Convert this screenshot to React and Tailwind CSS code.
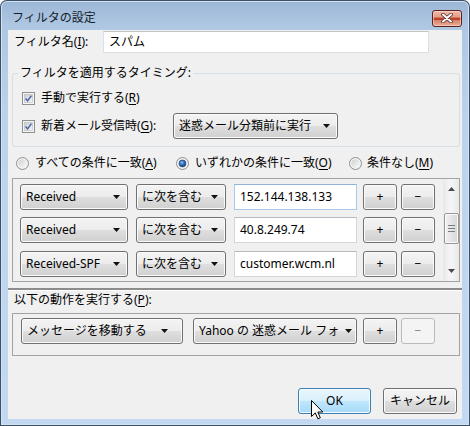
import React from "react";

const btn =
  "flex items-center border border-[#707070] rounded-[3px] bg-[linear-gradient(to_bottom,#f4f4f4_0%,#ececec_48%,#dedede_52%,#d0d0d0_100%)] shadow-[inset_0_0_0_1px_#fbfbfb]";

function Arrow() {
  return (
    <svg width="7" height="4" viewBox="0 0 7 4" className="shrink-0">
      <path d="M0 0H7L3.5 4Z" fill="#111" />
    </svg>
  );
}

function Combo({ w, children, pr = "pr-[7px]" }) {
  return (
    <div className={`${btn} ${w} ${pr} h-[26px] pl-[5px] gap-[2px]`}>
      <span className="flex-1 min-w-0 whitespace-nowrap">{children}</span>
      <Arrow />
    </div>
  );
}

function Btn({ children, disabled }) {
  if (disabled)
    return (
      <div className="flex items-center justify-center w-[34px] h-[26px] border border-[#b8bcbf] rounded-[3px] bg-[#f4f4f4] text-[#8a8a8a]">
        {children}
      </div>
    );
  return <div className={`${btn} justify-center w-[34px] h-[26px]`}>{children}</div>;
}

function Input({ w, children, focus }) {
  return (
    <div
      className={`${w} h-[26px] flex items-center px-[5px] bg-white border ${
        focus ? "border-[#a9c9e8] border-t-[#8fb4d8]" : "border-[#d3d6db] border-t-[#b5b9bf]"
      }`}
    >
      {children}
    </div>
  );
}

function Check() {
  return (
    <svg width="13" height="13" viewBox="0 0 13 13" className="shrink-0">
      <defs>
        <linearGradient id="cbg" x1="0" y1="0" x2="1" y2="1">
          <stop offset="0" stopColor="#c9ccd1" />
          <stop offset="1" stopColor="#f7f7f7" />
        </linearGradient>
      </defs>
      <rect x="0.5" y="0.5" width="12" height="12" fill="#f5f5f5" stroke="#8e8f8f" />
      <rect x="2.5" y="2.5" width="8" height="8" fill="url(#cbg)" stroke="#b9b9b9" strokeWidth="0.6" />
      <path d="M3.6 6.6 L5.6 8.9 L9.4 3.6" fill="none" stroke="#4862a8" strokeWidth="1.5" />
    </svg>
  );
}

function Radio({ on }) {
  return (
    <svg width="13" height="13" viewBox="0 0 13 13" className="shrink-0">
      <defs>
        <linearGradient id="rbg" x1="0" y1="0" x2="1" y2="1">
          <stop offset="0" stopColor="#cfcfcf" />
          <stop offset="1" stopColor="#fafafa" />
        </linearGradient>
        <radialGradient id="rdot" cx="0.4" cy="0.35" r="0.7">
          <stop offset="0" stopColor="#8cc4f6" />
          <stop offset="0.5" stopColor="#2e6fc0" />
          <stop offset="1" stopColor="#153f80" />
        </radialGradient>
      </defs>
      <circle cx="6.5" cy="6.5" r="6" fill="#f2f2f2" stroke="#8e8f8f" />
      <circle cx="6.5" cy="6.5" r="4.3" fill="url(#rbg)" />
      {on && <circle cx="6.5" cy="6.5" r="3.4" fill="url(#rdot)" stroke="#22406e" strokeWidth="0.7" />}
    </svg>
  );
}

function U({ children }) {
  return <span className="underline underline-offset-[2px]">{children}</span>;
}

function Scrollbar() {
  return (
    <div className="w-[16px] h-full flex flex-col items-center bg-[linear-gradient(to_right,#e8e8e8,#f4f4f4_40%,#f4f4f4_60%,#e8e8e8)]">
      <div className="h-[17px] flex items-center justify-center pt-[3px]">
        <svg width="7" height="4" viewBox="0 0 7 4">
          <path d="M0 4H7L3.5 0Z" fill="#4a4a4a" />
        </svg>
      </div>
      <div className="mt-[17px] w-[15px] h-[31px] rounded-[2px] border border-[#979797] bg-[linear-gradient(to_right,#f1f1f1,#e4e4e4_50%,#d6d6d6)] flex flex-col items-center justify-center gap-[2px] shadow-[inset_0_0_0_1px_#fafafa]">
        <div className="w-[7px] h-px bg-[#7d7d7d]" />
        <div className="w-[7px] h-px bg-[#7d7d7d]" />
        <div className="w-[7px] h-px bg-[#7d7d7d]" />
      </div>
      <div className="flex-1" />
      <div className="h-[17px] flex items-center justify-center pb-[3px]">
        <svg width="7" height="4" viewBox="0 0 7 4">
          <path d="M0 0H7L3.5 4Z" fill="#4a4a4a" />
        </svg>
      </div>
    </div>
  );
}

function CondRow({ field, value, focus, mt }) {
  return (
    <div className={`flex items-center h-[26px] ${mt}`}>
      <Combo w="w-[108px]">{field}</Combo>
      <div className="w-[8px]" />
      <Combo w="w-[90px]">に次を含む</Combo>
      <div className="w-[8px]" />
      <Input w="w-[123px]" focus={focus}>{value}</Input>
      <div className="w-[6px]" />
      <Btn>+</Btn>
      <div className="w-[4px]" />
      <Btn>−</Btn>
    </div>
  );
}

export default function App() {
  return (
    <div className="relative w-[470px] h-[426px] overflow-hidden rounded-t-[7px] bg-[linear-gradient(to_bottom,#9bb6d6_0px,#aec7e2_26px,#bcd3ec_120px,#c2d9f1_100%)] shadow-[inset_0_0_0_1px_#3c4f66,inset_0_0_0_2px_#d4e3f2,inset_0_-2px_0_#1f4f63] font-['Noto_Sans','Noto_Sans_CJK_JP',sans-serif] text-[12px] text-black leading-[16px]">
      {/* title bar */}
      <div className="h-[30px] flex items-center justify-between pt-[6px] pl-[12px] pr-[8px]">
        <span className="text-[12px] text-[#141e2a]">フィルタの設定</span>
        <div className="w-[30px] h-[17px] rounded-[3px] border border-[#5a2220] flex items-center justify-center bg-[linear-gradient(to_bottom,#f0baa8_0%,#e29c86_42%,#c4472f_45%,#b8402b_58%,#d8836a_62%,#e9ad98_100%)] shadow-[inset_0_0_0_1px_rgba(255,220,210,0.6)]">
          <svg width="12" height="10" viewBox="0 0 12 10">
            <path d="M2 1.5 L10 8.5 M10 1.5 L2 8.5" stroke="#5a2a28" strokeWidth="3.6" strokeLinecap="round" />
            <path d="M2 1.5 L10 8.5 M10 1.5 L2 8.5" stroke="#ffffff" strokeWidth="2" strokeLinecap="round" />
          </svg>
        </div>
      </div>

      {/* client */}
      <div className="mx-[8px] h-[389px] bg-[#f0f0f0] flex flex-col">
        {/* name row */}
        <div className="mt-[1px] h-[22px] flex items-center">
          <span className="pl-[6px] w-[95px]">
            フィルタ名(<U>I</U>):
          </span>
          <div className="w-[326px] h-[22px] flex items-center px-[5px] bg-white border border-[#dcdfe3] border-t-[#c0c4c9]">
            スパム
          </div>
        </div>

        {/* group box */}
        <div className="mt-[20px] ml-[4px] w-[448px] h-[74px] relative border border-[#d5dfe5] rounded-[3px] flex flex-col pl-[9px]">
          <span className="absolute left-[5px] top-[-9px] px-[2px] bg-[#f0f0f0]">
            フィルタを適用するタイミング:
          </span>
          <div className="mt-[16px] h-[16px] flex items-center gap-[6px]">
            <Check />
            <span>
              手動で実行する(<U>R</U>)
            </span>
          </div>
          <div className="mt-[7px] h-[26px] flex items-center">
            <Check />
            <span className="ml-[6px] w-[132px]">
              新着メール受信時(<U>G</U>):
            </span>
            <Combo w="w-[165px]">迷惑メール分類前に実行</Combo>
          </div>
        </div>

        {/* radio row */}
        <div className="mt-[8px] h-[16px] flex items-center pl-[8px]">
          <div className="w-[160px] flex items-center gap-[6px]">
            <Radio />
            <span>
              すべての条件に一致(<U>A</U>)
            </span>
          </div>
          <div className="w-[173px] flex items-center gap-[6px]">
            <Radio on />
            <span>
              いずれかの条件に一致(<U>O</U>)
            </span>
          </div>
          <div className="flex items-center gap-[5px]">
            <Radio />
            <span>
              条件なし(<U>M</U>)
            </span>
          </div>
        </div>

        {/* condition list */}
        <div className="mt-[7px] ml-[4px] w-[448px] h-[104px] border border-[#a3a3a3] flex">
          <div className="flex-1 flex flex-col pl-[7px] pt-[5px]">
            <CondRow field="Received" value="152.144.138.133" focus />
            <CondRow field="Received" value="40.8.249.74" mt="mt-[7px]" />
            <CondRow field="Received-SPF" value="customer.wcm.nl" mt="mt-[8px]" />
          </div>
          <Scrollbar />
        </div>

        {/* separator */}
        <div className="mt-[6px] h-[2px] bg-[#8c8c8c]" />
        <div className="h-px bg-white" />

        {/* action label */}
        <div className="mt-[1px] h-[16px] pl-[6px]">
          以下の動作を実行する(<U>P</U>):
        </div>

        {/* action box */}
        <div className="mt-[5px] ml-[4px] w-[448px] h-[43px] border border-[#a3a3a3] flex items-start pl-[8px] pt-[4px]">
          <Combo w="w-[162px]" pr="pr-[14px]">メッセージを移動する</Combo>
          <div className="w-[10px]" />
          <Combo w="w-[164px]" pr="pr-[4px]">Yahoo の 迷惑メール フォ</Combo>
          <div className="w-[6px]" />
          <Btn>+</Btn>
          <div className="w-[4px]" />
          <Btn disabled>−</Btn>
        </div>

        {/* buttons */}
        <div className="mt-[32px] flex justify-end gap-[12px] pr-[5px]">
          <div className="w-[73px] h-[26px] flex items-center justify-center rounded-[3px] border border-[#3c7fb1] bg-[linear-gradient(to_bottom,#eaf6fd_0%,#d9f0fc_48%,#bee6fd_52%,#a7d9f5_100%)] shadow-[inset_0_0_0_1px_#f4fbff]">
            OK
          </div>
          <div className={`${btn} justify-center w-[74px] h-[26px]`}>キャンセル</div>
        </div>
      </div>

      {/* mouse cursor */}
      <svg
        width="13"
        height="20"
        viewBox="0 0 13 20"
        className="absolute left-[311px] top-[400px]"
      >
        <path
          d="M0.5 0.5 L0.5 16.5 L4.3 12.9 L6.9 18.8 L9.3 17.8 L6.8 12 L11.8 12 Z"
          fill="#fff"
          stroke="#000"
          strokeWidth="1"
          strokeLinejoin="miter"
        />
      </svg>
    </div>
  );
}
